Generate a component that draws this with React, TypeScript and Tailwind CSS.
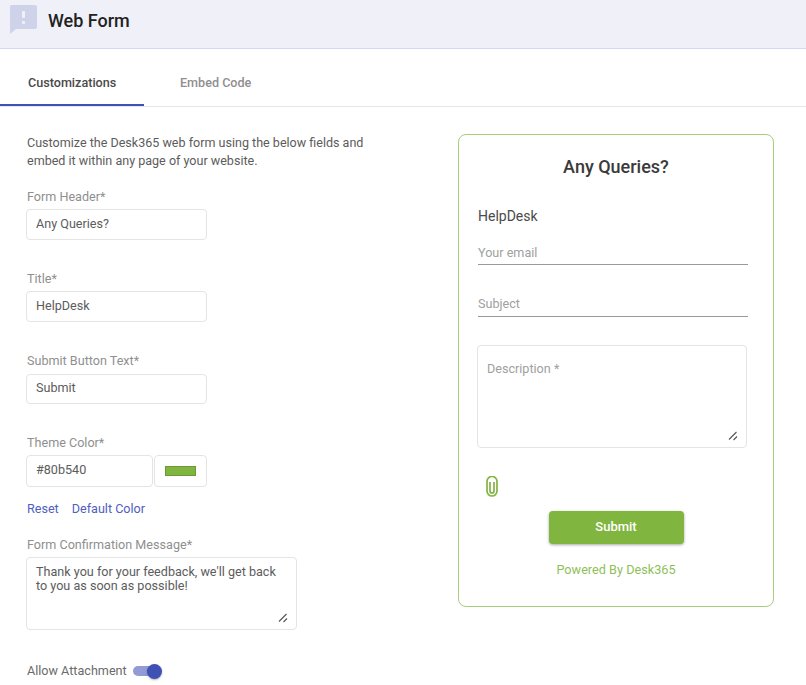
function Label({ children }: { children: React.ReactNode }) {
  return <div className="text-[12.6px] leading-[18px] text-[#8f8f8f]">{children}</div>;
}

function TextBox({ value, className }: { value: string; className: string }) {
  return (
    <div className={`flex items-center rounded-[4px] border border-[#e4e4e4] bg-white pl-[9px] text-[12.6px] text-[#5c5c5c] ${className}`}>
      {value}
    </div>
  );
}

function Grip() {
  return (
    <svg className="absolute right-[8px] bottom-[6px] h-[10px] w-[10px] text-[#555]" viewBox="0 0 10 10" fill="none" stroke="currentColor" strokeWidth="1.1">
      <path d="M1 8.5 8.5 1M5.5 9 9 5.5" />
    </svg>
  );
}

export default function App() {
  return (
    <div className="h-[685px] w-[806px] overflow-hidden bg-white font-['Roboto',sans-serif]">
      {/* header */}
      <div className="flex h-[49px] items-start border-b border-[#d3d8ee] bg-[#f0f1f8] pl-[9px]">
        <svg className="mt-[5px] h-[29px] w-[29px]" viewBox="0 0 29 29">
          <path d="M2 0h24a2 2 0 0 1 2 2v20a2 2 0 0 1-2 2H7l-6 5V2a2 2 0 0 1 1-2z" fill="#cfd3ea" />
          <rect x="13" y="6" width="3" height="7" rx="1" fill="#f0f1f8" />
          <rect x="13" y="16" width="3" height="3" rx="1" fill="#f0f1f8" />
        </svg>
        <h1 className="mt-[10px] ml-[10px] text-[18px] leading-[22px] font-medium text-[#222]">Web Form</h1>
      </div>

      {/* tabs */}
      <div className="flex h-[58px] border-b border-[#e6e6e6] text-[12.6px]">
        <div className="flex w-[144px] items-center border-b-2 border-[#3f51b5] pt-[14px] pl-[28px] font-medium text-[#4a4a4a]">
          Customizations
        </div>
        <div className="flex items-center pt-[12px] pl-[36px] font-medium text-[#8f8f8f]">Embed Code</div>
      </div>

      <div className="flex">
        {/* settings */}
        <div className="w-[458px] pl-[26px]">
          <p className="mt-[27px] w-[350px] pl-px text-[12.55px] leading-[18px] text-[#5c5c5c]">
            Customize the Desk365 web form using the below fields and embed it within any page of your website.
          </p>
          <div className="mt-[18px] pl-px"><Label>Form Header*</Label></div>
          <TextBox value="Any Queries?" className="mt-[3px] h-[31px] w-[181px]" />
          <div className="mt-[30px] pl-px"><Label>Title*</Label></div>
          <TextBox value="HelpDesk" className="mt-[3px] h-[31px] w-[181px]" />
          <div className="mt-[30px] pl-px"><Label>Submit Button Text*</Label></div>
          <TextBox value="Submit" className="mt-[4px] h-[30px] w-[181px] pb-[1px]" />
          <div className="mt-[30px] pl-px"><Label>Theme Color*</Label></div>
          <div className="mt-[3px] flex">
            <TextBox value="#80b540" className="h-[32px] w-[127px] pb-[2px]" />
            <div className="ml-px flex h-[32px] w-[53px] items-center justify-center rounded-[4px] border border-[#e4e4e4]">
              <div className="h-[10px] w-[31px] border border-[#6d9a36] bg-[#80b540]" />
            </div>
          </div>
          <div className="mt-[13px] flex gap-[13px] pl-px text-[12.6px] leading-[18px] text-[#4f60c0]">
            <span>Reset</span>
            <span>Default Color</span>
          </div>
          <div className="mt-[18px] pl-px"><Label>Form Confirmation Message*</Label></div>
          <div className="relative mt-[3px] h-[73px] w-[271px] rounded-[4px] border border-[#e4e4e4] px-[9px] pt-[7px] text-[12.6px] leading-[14px] text-[#5c5c5c]">
            Thank you for your feedback, we'll get back to you as soon as possible!
            <Grip />
          </div>
          <div className="mt-[32px] flex items-center pl-px">
            <span className="text-[12.6px] leading-[18px] text-[#6b6b6b]">Allow Attachment</span>
            <div className="relative ml-[6px] h-[10px] w-[26px] rounded-full bg-[#929bd6]">
              <div className="absolute top-[-2.5px] right-[-3px] h-[15px] w-[15px] rounded-full bg-[#3f51b5] shadow-[0_1px_2px_rgba(0,0,0,0.3)]" />
            </div>
          </div>
        </div>

        {/* preview */}
        <div className="mt-[27px] flex h-[473px] w-[316px] flex-col rounded-[8px] border border-[#a6cf79] px-[19px]">
          <h2 className="mt-[21px] text-center text-[18px] leading-[22px] font-medium text-[#3a3a3a]">Any Queries?</h2>
          <div className="mt-[29px] text-[14px] leading-[18px] text-[#4a4a4a]">HelpDesk</div>
          <div className="mt-[19px] h-[21px] w-[270px] border-b border-[#999] text-[12.6px] leading-[18px] text-[#a0a0a0]">Your email</div>
          <div className="mt-[30px] h-[22px] w-[270px] border-b border-[#999] text-[12.6px] leading-[18px] text-[#a0a0a0]">Subject</div>
          <div className="relative mt-[28px] -ml-px h-[103px] w-[270px] rounded-[4px] border border-[#e4e4e4] pt-[14px] pl-[9px] text-[12.6px] leading-[18px] text-[#a0a0a0]">
            Description *
            <Grip />
          </div>
          <svg className="mt-[28px] ml-[8px] h-[21px] w-[12px] text-[#80b540]" viewBox="0 0 12 21" fill="none" stroke="currentColor" strokeWidth="1.7">
            <path d="M1 15V5.5a5 5 0 0 1 10 0V15a5 5 0 0 1-10 0" />
            <path d="M4 6v9a2 2 0 0 0 4 0V6" />
          </svg>
          <button className="mx-auto mt-[14px] h-[33px] w-[135px] rounded-[4px] bg-[#80b540] pb-[2px] text-[13px] font-medium text-white shadow-[0_1px_3px_rgba(0,0,0,0.35)]">
            Submit
          </button>
          <div className="mt-[17px] text-center text-[12.7px] leading-[18px] text-[#8fbf58]">Powered By Desk365</div>
        </div>
      </div>
    </div>
  );
}
